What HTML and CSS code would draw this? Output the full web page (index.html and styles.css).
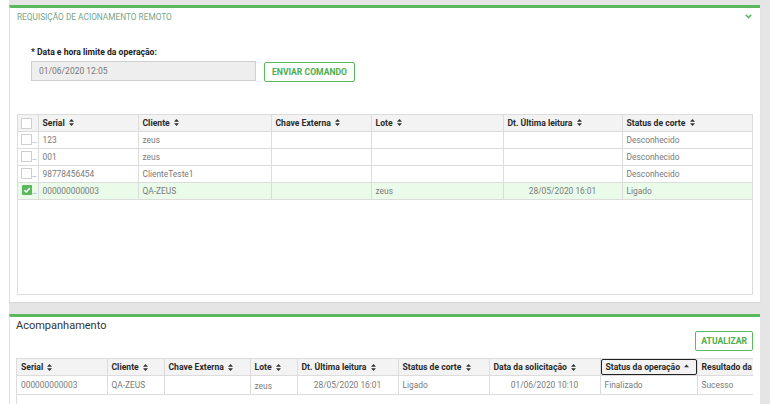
FILE: index.html
```html
<!DOCTYPE html>
<html lang="pt-BR">
<head>
<meta charset="utf-8">
<title>Requisição de acionamento remoto</title>
<link rel="stylesheet" href="styles.css">
</head>
<body>
<div class="wrap">
  <section class="panel panel-req">
    <div class="panel-head">
      <span class="panel-title">REQUISIÇÃO DE ACIONAMENTO REMOTO</span>
      <svg class="chev" width="7" height="5" viewBox="0 0 7 5"><path d="M0.8 0.8 L3.5 3.6 L6.2 0.8" fill="none" stroke="#5cb85c" stroke-width="1.6"/></svg>
    </div>
    <div class="form">
      <div class="label">* Data e hora limite da operação:</div>
      <div class="form-row">
        <div class="input">01/06/2020 12:05</div>
        <button class="btn">ENVIAR COMANDO</button>
      </div>
    </div>
    <div class="grid-box grid-box-1">
      <table class="grid">
        <colgroup>
          <col style="width:20px"><col style="width:100px"><col style="width:133px"><col style="width:100px"><col style="width:132px"><col style="width:119px"><col style="width:132px">
        </colgroup>
        <thead>
          <tr>
            <th class="chk-cell"><span class="box"></span></th>
            <th>Serial <svg class="sort" width="5" height="7" viewBox="0 0 10 14"><path d="M5 0 L10 5.5 H0 Z M5 14 L0 8.5 H10 Z"/></svg></th>
            <th>Cliente <svg class="sort" width="5" height="7" viewBox="0 0 10 14"><path d="M5 0 L10 5.5 H0 Z M5 14 L0 8.5 H10 Z"/></svg></th>
            <th>Chave Externa <svg class="sort" width="5" height="7" viewBox="0 0 10 14"><path d="M5 0 L10 5.5 H0 Z M5 14 L0 8.5 H10 Z"/></svg></th>
            <th>Lote <svg class="sort" width="5" height="7" viewBox="0 0 10 14"><path d="M5 0 L10 5.5 H0 Z M5 14 L0 8.5 H10 Z"/></svg></th>
            <th>Dt. Última leitura <svg class="sort" width="5" height="7" viewBox="0 0 10 14"><path d="M5 0 L10 5.5 H0 Z M5 14 L0 8.5 H10 Z"/></svg></th>
            <th>Status de corte <svg class="sort" width="5" height="7" viewBox="0 0 10 14"><path d="M5 0 L10 5.5 H0 Z M5 14 L0 8.5 H10 Z"/></svg></th>
          </tr>
        </thead>
        <tbody>
          <tr>
            <td class="chk-cell"><span class="box"></span><span class="dots">…</span></td>
            <td>123</td><td>zeus</td><td></td><td></td><td class="c"></td><td>Desconhecido</td>
          </tr>
          <tr>
            <td class="chk-cell"><span class="box"></span><span class="dots">…</span></td>
            <td>001</td><td>zeus</td><td></td><td></td><td class="c"></td><td>Desconhecido</td>
          </tr>
          <tr>
            <td class="chk-cell"><span class="box"></span><span class="dots">…</span></td>
            <td>98778456454</td><td>ClienteTeste1</td><td></td><td></td><td class="c"></td><td>Desconhecido</td>
          </tr>
          <tr class="sel">
            <td class="chk-cell"><svg class="boxon" width="10" height="10" viewBox="0 0 10 10"><rect width="10" height="10" rx="1" fill="#5cb85c"/><path d="M2.3 5.2 L4.2 7 L7.8 3.2" fill="none" stroke="#fff" stroke-width="1.5"/></svg><span class="dots">…</span></td>
            <td>000000000003</td><td>QA-ZEUS</td><td></td><td>zeus</td><td class="c">28/05/2020 16:01</td><td>Ligado</td>
          </tr>
        </tbody>
      </table>
    </div>
  </section>

  <section class="panel panel-acomp">
    <div class="acomp-head">
      <h2 class="acomp-title">Acompanhamento</h2>
      <button class="btn btn-upd">ATUALIZAR</button>
    </div>
    <div class="grid-box grid-box-2">
      <table class="grid grid-2">
        <colgroup>
          <col style="width:90px"><col style="width:57px"><col style="width:86px"><col style="width:47px"><col style="width:101px"><col style="width:91px"><col style="width:111px"><col style="width:97px"><col style="width:80px">
        </colgroup>
        <thead>
          <tr>
            <th>Serial <svg class="sort" width="5" height="7" viewBox="0 0 10 14"><path d="M5 0 L10 5.5 H0 Z M5 14 L0 8.5 H10 Z"/></svg></th>
            <th>Cliente <svg class="sort" width="5" height="7" viewBox="0 0 10 14"><path d="M5 0 L10 5.5 H0 Z M5 14 L0 8.5 H10 Z"/></svg></th>
            <th>Chave Externa <svg class="sort" width="5" height="7" viewBox="0 0 10 14"><path d="M5 0 L10 5.5 H0 Z M5 14 L0 8.5 H10 Z"/></svg></th>
            <th>Lote <svg class="sort" width="5" height="7" viewBox="0 0 10 14"><path d="M5 0 L10 5.5 H0 Z M5 14 L0 8.5 H10 Z"/></svg></th>
            <th>Dt. Última leitura <svg class="sort" width="5" height="7" viewBox="0 0 10 14"><path d="M5 0 L10 5.5 H0 Z M5 14 L0 8.5 H10 Z"/></svg></th>
            <th>Status de corte <svg class="sort" width="5" height="7" viewBox="0 0 10 14"><path d="M5 0 L10 5.5 H0 Z M5 14 L0 8.5 H10 Z"/></svg></th>
            <th>Data da solicitação <svg class="sort" width="5" height="7" viewBox="0 0 10 14"><path d="M5 0 L10 5.5 H0 Z M5 14 L0 8.5 H10 Z"/></svg></th>
            <th class="focus"><span class="focus-ring">Status da operação <svg class="sort" width="5" height="7" viewBox="0 0 10 14"><path d="M5 1 L10 6.5 H0 Z"/></svg></span></th>
            <th>Resultado da</th>
          </tr>
        </thead>
        <tbody>
          <tr>
            <td>000000000003</td><td>QA-ZEUS</td><td></td><td class="low">zeus</td><td class="c">28/05/2020 16:01</td><td>Ligado</td><td class="c">01/06/2020 10:10</td><td>Finalizado</td><td>Sucesso</td>
          </tr>
        </tbody>
      </table>
    </div>
  </section>
</div>
</body>
</html>
```
FILE: styles.css
```css
* { box-sizing: border-box; }

html, body {
  margin: 0;
  padding: 0;
  background: #ffffff;
  font-family: Roboto, "Liberation Sans", Arial, sans-serif;
  color: #333;
}

.wrap {
  margin-left: 9px;
  background: #e5e5e5;
  padding: 5px 10px 0 0;
  height: 404px;
  overflow: hidden;
}

.panel {
  background: #fff;
  border-top: 3px solid #5cb85c;
  border-left: 1px solid #dedede;
}

.panel-req {
  height: 297px;
  padding: 0 7px 7px 7px;
  display: flex;
  flex-direction: column;
  box-shadow: 0 1px 1px rgba(0,0,0,0.06);
}

.panel-head {
  height: 18px;
  display: flex;
  align-items: center;
  justify-content: space-between;
}

.panel-title {
  font-size: 8.3px;
  color: #78a488;
}

.chev {
  margin-right: 1px;
  margin-top: -2px;
}

.form {
  padding-left: 14px;
  margin-top: 21px;
}

.label {
  font-size: 8.6px;
  font-weight: 700;
  color: #222;
  line-height: 11px;
  margin-bottom: 3px;
}

.form-row {
  display: flex;
  align-items: flex-start;
  gap: 8px;
}

.input {
  width: 225px;
  height: 20px;
  background: #eeeeee;
  border: 1px solid #cfcfcf;
  font-size: 8.5px;
  color: #777;
  padding-left: 7px;
  line-height: 18px;
}

.btn {
  font-family: Roboto, "Liberation Sans", Arial, sans-serif;
  font-size: 8.6px;
  font-weight: 700;
  color: #4cae4c;
  background: #fff;
  border: 1.5px solid #5cb85c;
  border-radius: 2px;
  height: 20px;
  padding: 0 7px;
  margin-top: 1px;
  line-height: 17px;
  cursor: pointer;
}

.grid-box {
  border: 1px solid #dcdcdc;
  overflow: hidden;
}

.grid-box-1 {
  margin-top: 32px;
  flex: 1;
}

.grid {
  border-collapse: collapse;
  table-layout: fixed;
  width: 736px;
}

.grid th,
.grid td {
  height: 16px;
  padding: 0 4px;
  font-size: 8.4px;
  text-align: left;
  white-space: nowrap;
  overflow: hidden;
  border: 1px solid #dcdcdc;
  line-height: 14px;
}

.grid thead tr:first-child th { border-top: none; }
.grid tr > *:first-child { border-left: none; }
.grid tr > *:last-child { border-right: none; }

.grid th {
  background: #f3f3f3;
  font-weight: 700;
  color: #2b2b2b;
  font-size: 8.6px;
}

.grid td {
  color: #7a7a7a;
}

.grid td.c { text-align: center; }
.grid td.low { line-height: 16px; padding-top: 2px; }

.sort {
  fill: #333;
  margin-left: 2px;
  vertical-align: -0.5px;
}

.chk-cell {
  padding: 0 0 0 3px !important;
}

.box {
  display: inline-block;
  width: 11px;
  height: 11px;
  border: 1px solid #cfcfcf;
  background: #fff;
  vertical-align: middle;
}

.boxon {
  display: inline-block;
  vertical-align: middle;
  margin-left: 1px;
}

.dots {
  font-size: 7px;
  color: #5b86b8;
  vertical-align: -1px;
}

.sel td { background: #eafbea; }

.panel-acomp {
  margin-top: 12px;
  height: 100px;
  padding: 0 7px 0 6px;
}

.acomp-head {
  display: flex;
  justify-content: space-between;
  align-items: flex-start;
}

.acomp-title {
  margin: 2px 0 0 0;
  font-size: 11px;
  font-weight: 400;
  line-height: 14px;
  color: #333;
}

.btn-upd {
  margin-top: 14px;
  padding: 0 5px;
}

.grid-box-2 {
  margin-top: 7px;
  height: 60px;
  border-right: none;
}

.grid-2 { width: 760px; }

.grid th.focus {
  padding: 0;
}

.focus-ring {
  display: block;
  height: 16px;
  border: 1px solid #222;
  border-radius: 2px;
  padding: 0 4px;
  line-height: 14px;
}
```
